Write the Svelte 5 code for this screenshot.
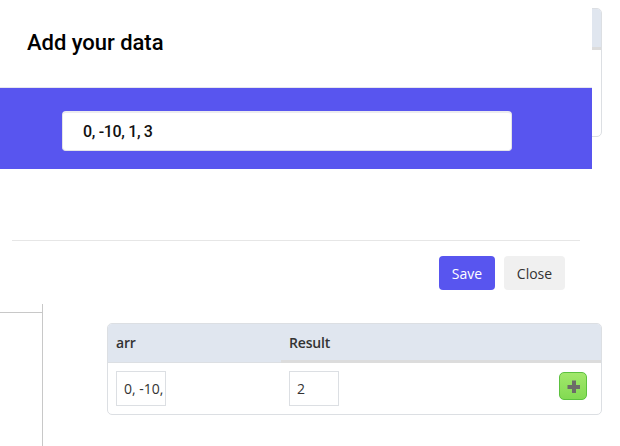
<script>
  let rows = [{ arr: '0, -10, 1, 3', result: '2' }];
  let data = '0, -10, 1, 3';
</script>

<div class="page">
  <div class="background">
    <div class="top-card">
      <div class="top-card-head"></div>
    </div>
    <div class="lower">
      <div class="side-box"></div>
      <div class="table-card">
        <div class="table-head">
          <div class="th th-arr">arr</div>
          <div class="th th-result">Result</div>
        </div>
        {#each rows as row}
          <div class="table-row">
            <div class="td td-arr"><input class="cell" value={row.arr} /></div>
            <div class="td td-result"><input class="cell" value={row.result} /></div>
            <button class="add" aria-label="Add row">
              <svg width="15" height="15" viewBox="0 0 15 15">
                <path d="M6 1.500h4V6h4v4h-4v4H6v-4H1.500V6H6z" fill="#6c6c68" />
              </svg>
            </button>
          </div>
        {/each}
      </div>
    </div>
  </div>

  <div class="modal">
    <h2>Add your data</h2>
    <div class="band">
      <input class="data-input" value={data} />
    </div>
    <div class="footer">
      <button class="btn save">Save</button>
      <button class="btn close">Close</button>
    </div>
  </div>
</div>

<style>
  :global(body) {
    margin: 0;
    background: #fff;
  }

  .page {
    position: relative;
    width: 620px;
    height: 446px;
    overflow: hidden;
    font-family: 'Open Sans', sans-serif;
  }

  .background {
    display: flex;
    flex-direction: column;
    height: 100%;
  }

  .top-card {
    align-self: flex-end;
    box-sizing: border-box;
    width: 300px;
    height: 129px;
    margin: 8px 18px 0 0;
    border: 1px solid #dcdfe3;
    border-radius: 5px;
    overflow: hidden;
  }

  .top-card-head {
    height: 38px;
    background: #e0e6ef;
    border-bottom: 3px solid #dcdcdc;
  }

  .lower {
    display: flex;
    align-items: flex-start;
    margin-top: 167px;
  }

  .side-box {
    box-sizing: border-box;
    width: 43px;
    height: 142px;
    border-right: 1px solid #c8c8c8;
    flex: none;
  }

  .side-box::after {
    content: '';
    display: block;
    margin-top: 8px;
    border-top: 1px solid #c8c8c8;
  }

  .table-card {
    box-sizing: border-box;
    width: 495px;
    height: 92px;
    margin: 19px 0 0 64px;
    border: 1px solid #dcdfe3;
    border-radius: 5px;
    overflow: hidden;
    flex: none;
  }

  .table-head {
    display: flex;
    height: 39px;
    background: #e0e6ef;
    box-sizing: border-box;
    border-bottom: 1px solid #dcdfe3;
  }

  .th {
    box-sizing: border-box;
    height: 39px;
    padding: 9px 0 0 8px;
    font-size: 14px;
    font-weight: 600;
    letter-spacing: -0.15px;
    color: #333;
  }

  .th-arr {
    width: 173px;
  }

  .th-result {
    flex: 1;
    border-bottom: 3px solid #dcdcdc;
  }

  .table-row {
    display: flex;
    align-items: flex-start;
    padding-top: 8px;
  }

  .td {
    box-sizing: border-box;
    padding-left: 8px;
  }

  .td-arr {
    width: 173px;
  }

  .td-result {
    flex: 1;
  }

  .cell {
    box-sizing: border-box;
    display: block;
    width: 50px;
    height: 35px;
    padding: 0 0 0 7px;
    border: 1px solid #dcdfe3;
    font-family: inherit;
    font-size: 14px;
    color: #333;
    background: #fff;
    outline: none;
  }

  .add {
    box-sizing: border-box;
    width: 28px;
    height: 28px;
    margin: 1px 14px 0 0;
    padding: 0;
    display: flex;
    align-items: center;
    justify-content: center;
    flex: none;
    border: 1px solid #5cc13f;
    border-radius: 5px;
    background: linear-gradient(#a2e76c, #82da52);
  }

  .modal {
    position: absolute;
    top: 0;
    left: 0;
    box-sizing: border-box;
    width: 592px;
    height: 303px;
    background: #fff;
  }

  h2 {
    margin: 0;
    box-sizing: border-box;
    height: 88px;
    padding: 28px 0 0 27px;
    font-family: Roboto, sans-serif;
    font-size: 22px;
    line-height: 29px;
    font-weight: 500;
    letter-spacing: -0.03px;
    color: #000;
    border-bottom: 1px solid #e6e6ee;
  }

  .band {
    box-sizing: border-box;
    height: 81px;
    padding: 23px 0 0 62px;
    background: #5855ef;
  }

  .data-input {
    box-sizing: border-box;
    display: block;
    width: 450px;
    height: 40px;
    padding: 0 20px;
    border: 1px solid #e3e3e8;
    border-top: 2px solid #ececf0;
    border-radius: 4px;
    font-family: Roboto, sans-serif;
    font-size: 16px;
    font-weight: 500;
    letter-spacing: -0.33px;
    color: #111;
    background: #fff;
    outline: none;
  }

  .footer {
    display: flex;
    justify-content: flex-end;
    gap: 9px;
    margin: 71px 12px 0 12px;
    padding: 15px 15px 0 0;
    border-top: 1px solid #e6e6e6;
  }

  .btn {
    box-sizing: border-box;
    height: 34px;
    padding: 0;
    border: none;
    border-radius: 4px;
    font-family: 'Open Sans', sans-serif;
    font-size: 14px;
  }

  .save {
    width: 56px;
    background: #5855ef;
    color: #fff;
  }

  .close {
    width: 61px;
    background: #f0f0f0;
    color: #333;
  }
</style>
